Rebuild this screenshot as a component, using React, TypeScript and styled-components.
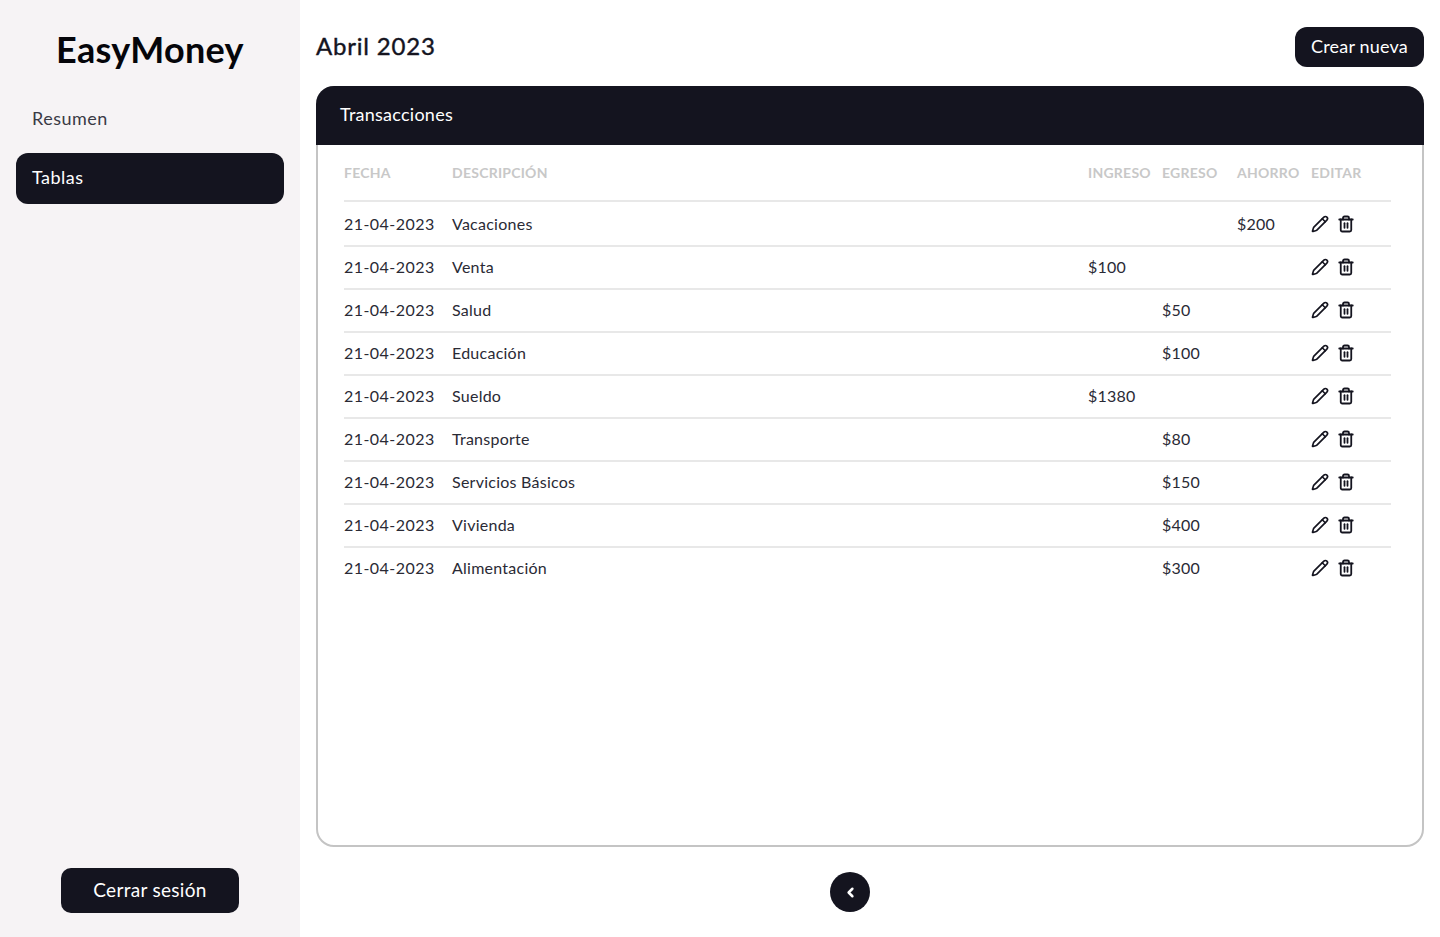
import styled, { createGlobalStyle } from "styled-components";
import { ChevronLeft, Pencil, Trash2 } from "lucide-react";

const GlobalStyle = createGlobalStyle`
  * {
    box-sizing: border-box;
  }
  body {
    margin: 0;
    font-family: Lato, "Open Sans", sans-serif;
    color: #14141f;
    background-color: #ffffff;
  }
`;

const Layout = styled.div`
  display: flex;
  height: 937px;
  overflow: hidden;
`;

const Sidebar = styled.aside`
  width: 300px;
  flex-shrink: 0;
  background-color: #f6f3f5;
  padding: 28px 16px 24px;
  display: flex;
  flex-direction: column;
`;

const Logo = styled.h1`
  margin: 0 0 24px;
  height: 42px;
  line-height: 42px;
  text-align: center;
  font-size: 36px;
  font-weight: 700;
  letter-spacing: 0.3px;
  color: #05050a;
`;

const NavItem = styled.a<{ $active?: boolean }>`
  display: block;
  height: 51px;
  line-height: 48px;
  margin-bottom: 8px;
  padding: 0 16px;
  border-radius: 12px;
  font-size: 18px;
  letter-spacing: 0.5px;
  color: ${(p) => (p.$active ? "#ffffff" : "#3a3a45")};
  background-color: ${(p) => (p.$active ? "#14141f" : "transparent")};
`;

const LogoutButton = styled.button`
  margin: auto auto 0;
  width: 178px;
  height: 45px;
  padding: 0 0 2px;
  border: none;
  border-radius: 10px;
  background-color: #14141f;
  color: #ffffff;
  font-family: inherit;
  font-size: 19px;
  letter-spacing: 0.3px;
`;

const Main = styled.main`
  flex: 1;
  padding: 27px 16px 0;
  display: flex;
  flex-direction: column;
`;

const Header = styled.header`
  display: flex;
  align-items: center;
  justify-content: space-between;
  height: 40px;
  margin-bottom: 19px;
`;

const Month = styled.h2`
  margin: 0 0 4px;
  font-size: 24px;
  font-weight: 400;
  letter-spacing: 0.8px;
  -webkit-text-stroke: 0.4px #14141f;
  color: #14141f;
`;

const CreateButton = styled.button`
  width: 129px;
  height: 40px;
  padding: 0 0 2px;
  border: none;
  border-radius: 12px;
  background-color: #14141f;
  color: #ffffff;
  font-family: inherit;
  font-size: 18px;
  letter-spacing: 0.2px;
`;

const Card = styled.section`
  height: 761px;
  border: 2px solid #c4c4c4;
  border-radius: 18px;
`;

const CardTitle = styled.div`
  margin: -2px -2px 0;
  height: 59px;
  line-height: 57px;
  padding: 0 24px;
  border-radius: 18px 18px 0 0;
  background-color: #14141f;
  color: #ffffff;
  font-size: 18px;
  letter-spacing: 0.25px;
`;

const TableWrap = styled.div`
  padding: 0 31px 0 26px;
`;

const Row = styled.div<{ $head?: boolean }>`
  display: grid;
  grid-template-columns: 108px 636px 74px 75px 74px 80px;
  align-items: center;
  height: ${(p) => (p.$head ? "57px" : "43px")};
  padding-bottom: ${(p) => (p.$head ? "0" : "1px")};
  border-bottom: 2px solid #e8e8e8;

  &:nth-child(2) {
    height: 45px;
    padding-bottom: 0;
  }

  &:last-child {
    border-bottom-color: transparent;
  }
`;

const HeadCell = styled.div`
  font-size: 14px;
  font-weight: 700;
  letter-spacing: 0.25px;
  color: #c8c8c8;
  text-transform: uppercase;
`;

const Cell = styled.div<{ $date?: boolean }>`
  font-size: 16px;
  line-height: 20px;
  letter-spacing: ${(p) => (p.$date ? "0.45px" : "0.25px")};
  color: #2a2a35;
`;

const Actions = styled.div`
  display: flex;
  align-items: center;
  gap: 8px;
  color: #14141f;
`;

const Pager = styled.div`
  display: flex;
  justify-content: center;
  padding: 25px 40px 0 0;
`;

const PagerButton = styled.button`
  width: 40px;
  height: 40px;
  border: none;
  border-radius: 50%;
  background-color: #14141f;
  color: #ffffff;
  display: flex;
  align-items: center;
  justify-content: center;
  padding: 0;
`;

const rows = [
  { name: "Vacaciones", ahorro: "$200" },
  { name: "Venta", ingreso: "$100" },
  { name: "Salud", egreso: "$50" },
  { name: "Educación", egreso: "$100" },
  { name: "Sueldo", ingreso: "$1380" },
  { name: "Transporte", egreso: "$80" },
  { name: "Servicios Básicos", egreso: "$150" },
  { name: "Vivienda", egreso: "$400" },
  { name: "Alimentación", egreso: "$300" },
];

export default function App() {
  return (
    <>
      <GlobalStyle />
      <Layout>
        <Sidebar>
          <Logo>EasyMoney</Logo>
          <NavItem>Resumen</NavItem>
          <NavItem $active>Tablas</NavItem>
          <LogoutButton>Cerrar sesión</LogoutButton>
        </Sidebar>
        <Main>
          <Header>
            <Month>Abril 2023</Month>
            <CreateButton>Crear nueva</CreateButton>
          </Header>
          <Card>
            <CardTitle>Transacciones</CardTitle>
            <TableWrap>
              <Row $head>
                <HeadCell>Fecha</HeadCell>
                <HeadCell>Descripción</HeadCell>
                <HeadCell>Ingreso</HeadCell>
                <HeadCell>Egreso</HeadCell>
                <HeadCell>Ahorro</HeadCell>
                <HeadCell>Editar</HeadCell>
              </Row>
              {rows.map((row) => (
                <Row key={row.name}>
                  <Cell $date>21-04-2023</Cell>
                  <Cell>{row.name}</Cell>
                  <Cell>{row.ingreso}</Cell>
                  <Cell>{row.egreso}</Cell>
                  <Cell>{row.ahorro}</Cell>
                  <Actions>
                    <Pencil size={18} strokeWidth={2.2} />
                    <Trash2 size={18} strokeWidth={2.4} />
                  </Actions>
                </Row>
              ))}
            </TableWrap>
          </Card>
          <Pager>
            <PagerButton>
              <ChevronLeft size={15} strokeWidth={4} />
            </PagerButton>
          </Pager>
        </Main>
      </Layout>
    </>
  );
}
